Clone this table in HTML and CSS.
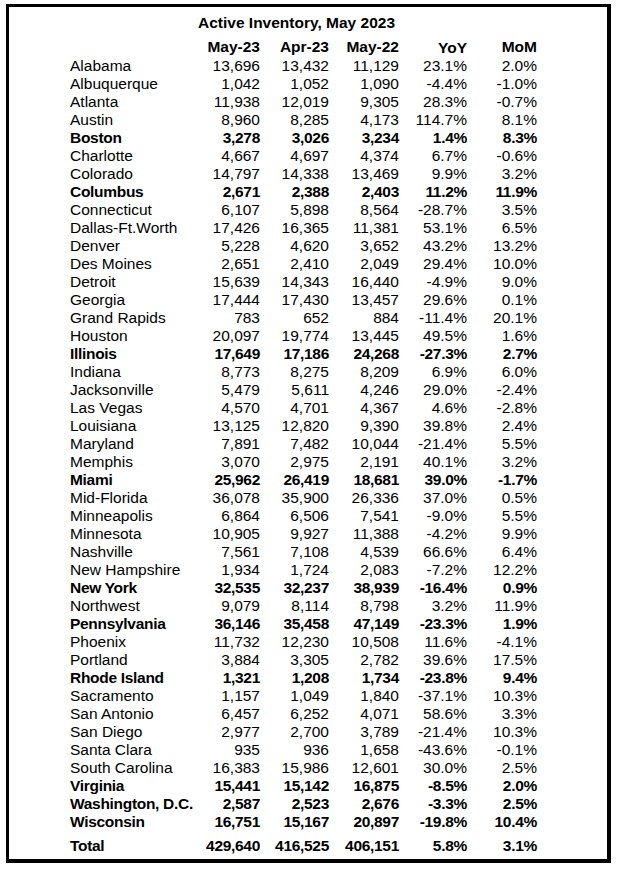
FILE: index.html
```html
<!DOCTYPE html>
<html>
<head>
<meta charset="utf-8">
<link rel="stylesheet" href="styles.css">
</head>
<body>
<div class="sheet">
  <div class="title">Active Inventory, May 2023</div>
  <div class="row head"><span></span><span>May-23</span><span>Apr-23</span><span>May-22</span><span class="yoy">YoY</span><span>MoM</span></div>
  <div class="row"><span>Alabama</span><span>13,696</span><span>13,432</span><span>11,129</span><span>23.1%</span><span>2.0%</span></div>
  <div class="row"><span>Albuquerque</span><span>1,042</span><span>1,052</span><span>1,090</span><span>-4.4%</span><span>-1.0%</span></div>
  <div class="row"><span>Atlanta</span><span>11,938</span><span>12,019</span><span>9,305</span><span>28.3%</span><span>-0.7%</span></div>
  <div class="row"><span>Austin</span><span>8,960</span><span>8,285</span><span>4,173</span><span>114.7%</span><span>8.1%</span></div>
  <div class="row b"><span>Boston</span><span>3,278</span><span>3,026</span><span>3,234</span><span>1.4%</span><span>8.3%</span></div>
  <div class="row"><span>Charlotte</span><span>4,667</span><span>4,697</span><span>4,374</span><span>6.7%</span><span>-0.6%</span></div>
  <div class="row"><span>Colorado</span><span>14,797</span><span>14,338</span><span>13,469</span><span>9.9%</span><span>3.2%</span></div>
  <div class="row b"><span>Columbus</span><span>2,671</span><span>2,388</span><span>2,403</span><span>11.2%</span><span>11.9%</span></div>
  <div class="row"><span>Connecticut</span><span>6,107</span><span>5,898</span><span>8,564</span><span>-28.7%</span><span>3.5%</span></div>
  <div class="row"><span>Dallas-Ft.Worth</span><span>17,426</span><span>16,365</span><span>11,381</span><span>53.1%</span><span>6.5%</span></div>
  <div class="row"><span>Denver</span><span>5,228</span><span>4,620</span><span>3,652</span><span>43.2%</span><span>13.2%</span></div>
  <div class="row"><span>Des Moines</span><span>2,651</span><span>2,410</span><span>2,049</span><span>29.4%</span><span>10.0%</span></div>
  <div class="row"><span>Detroit</span><span>15,639</span><span>14,343</span><span>16,440</span><span>-4.9%</span><span>9.0%</span></div>
  <div class="row"><span>Georgia</span><span>17,444</span><span>17,430</span><span>13,457</span><span>29.6%</span><span>0.1%</span></div>
  <div class="row"><span>Grand Rapids</span><span>783</span><span>652</span><span>884</span><span>-11.4%</span><span>20.1%</span></div>
  <div class="row"><span>Houston</span><span>20,097</span><span>19,774</span><span>13,445</span><span>49.5%</span><span>1.6%</span></div>
  <div class="row b"><span>Illinois</span><span>17,649</span><span>17,186</span><span>24,268</span><span>-27.3%</span><span>2.7%</span></div>
  <div class="row"><span>Indiana</span><span>8,773</span><span>8,275</span><span>8,209</span><span>6.9%</span><span>6.0%</span></div>
  <div class="row"><span>Jacksonville</span><span>5,479</span><span>5,611</span><span>4,246</span><span>29.0%</span><span>-2.4%</span></div>
  <div class="row"><span>Las Vegas</span><span>4,570</span><span>4,701</span><span>4,367</span><span>4.6%</span><span>-2.8%</span></div>
  <div class="row"><span>Louisiana</span><span>13,125</span><span>12,820</span><span>9,390</span><span>39.8%</span><span>2.4%</span></div>
  <div class="row"><span>Maryland</span><span>7,891</span><span>7,482</span><span>10,044</span><span>-21.4%</span><span>5.5%</span></div>
  <div class="row"><span>Memphis</span><span>3,070</span><span>2,975</span><span>2,191</span><span>40.1%</span><span>3.2%</span></div>
  <div class="row b"><span>Miami</span><span>25,962</span><span>26,419</span><span>18,681</span><span>39.0%</span><span>-1.7%</span></div>
  <div class="row"><span>Mid-Florida</span><span>36,078</span><span>35,900</span><span>26,336</span><span>37.0%</span><span>0.5%</span></div>
  <div class="row"><span>Minneapolis</span><span>6,864</span><span>6,506</span><span>7,541</span><span>-9.0%</span><span>5.5%</span></div>
  <div class="row"><span>Minnesota</span><span>10,905</span><span>9,927</span><span>11,388</span><span>-4.2%</span><span>9.9%</span></div>
  <div class="row"><span>Nashville</span><span>7,561</span><span>7,108</span><span>4,539</span><span>66.6%</span><span>6.4%</span></div>
  <div class="row"><span>New Hampshire</span><span>1,934</span><span>1,724</span><span>2,083</span><span>-7.2%</span><span>12.2%</span></div>
  <div class="row b"><span>New York</span><span>32,535</span><span>32,237</span><span>38,939</span><span>-16.4%</span><span>0.9%</span></div>
  <div class="row"><span>Northwest</span><span>9,079</span><span>8,114</span><span>8,798</span><span>3.2%</span><span>11.9%</span></div>
  <div class="row b"><span>Pennsylvania</span><span>36,146</span><span>35,458</span><span>47,149</span><span>-23.3%</span><span>1.9%</span></div>
  <div class="row"><span>Phoenix</span><span>11,732</span><span>12,230</span><span>10,508</span><span>11.6%</span><span>-4.1%</span></div>
  <div class="row"><span>Portland</span><span>3,884</span><span>3,305</span><span>2,782</span><span>39.6%</span><span>17.5%</span></div>
  <div class="row b"><span>Rhode Island</span><span>1,321</span><span>1,208</span><span>1,734</span><span>-23.8%</span><span>9.4%</span></div>
  <div class="row"><span>Sacramento</span><span>1,157</span><span>1,049</span><span>1,840</span><span>-37.1%</span><span>10.3%</span></div>
  <div class="row"><span>San Antonio</span><span>6,457</span><span>6,252</span><span>4,071</span><span>58.6%</span><span>3.3%</span></div>
  <div class="row"><span>San Diego</span><span>2,977</span><span>2,700</span><span>3,789</span><span>-21.4%</span><span>10.3%</span></div>
  <div class="row"><span>Santa Clara</span><span>935</span><span>936</span><span>1,658</span><span>-43.6%</span><span>-0.1%</span></div>
  <div class="row"><span>South Carolina</span><span>16,383</span><span>15,986</span><span>12,601</span><span>30.0%</span><span>2.5%</span></div>
  <div class="row b"><span>Virginia</span><span>15,441</span><span>15,142</span><span>16,875</span><span>-8.5%</span><span>2.0%</span></div>
  <div class="row b"><span>Washington, D.C.</span><span>2,587</span><span>2,523</span><span>2,676</span><span>-3.3%</span><span>2.5%</span></div>
  <div class="row b"><span>Wisconsin</span><span>16,751</span><span>15,167</span><span>20,897</span><span>-19.8%</span><span>10.4%</span></div>
  <div class="row b total"><span>Total</span><span>429,640</span><span>416,525</span><span>406,151</span><span>5.8%</span><span>3.1%</span></div>
</div>
</body>
</html>
```
FILE: styles.css
```css
html, body {
  margin: 0;
  padding: 0;
  background: #fff;
}
body {
  font-family: "Liberation Sans", Arial, sans-serif;
  font-size: 15.5px;
  color: #000;
}
.sheet {
  box-sizing: border-box;
  margin: 4px 0 0 6px;
  width: 605px;
  height: 859px;
  border-style: solid;
  border-color: #000;
  border-width: 3px 4px 4px 3px;
  padding: 7px 0 0 61px;
}
.title {
  width: 575px;
  margin-left: -61px;
  text-align: center;
  font-weight: bold;
  line-height: 18px;
}
.row {
  display: grid;
  grid-template-columns: 130px 60px 69px 70px 68px 70px;
  line-height: 18px;
  height: 18px;
  white-space: nowrap;
}
.row span {
  text-align: right;
}
.row span:first-child {
  text-align: left;
}
.head {
  margin-top: 6px;
  margin-bottom: 1px;
  font-weight: bold;
}
.yoy {
  position: relative;
  top: 1px;
}
.b {
  font-weight: bold;
  letter-spacing: -0.3px;
}
.total {
  margin-top: 6px;
}
```
